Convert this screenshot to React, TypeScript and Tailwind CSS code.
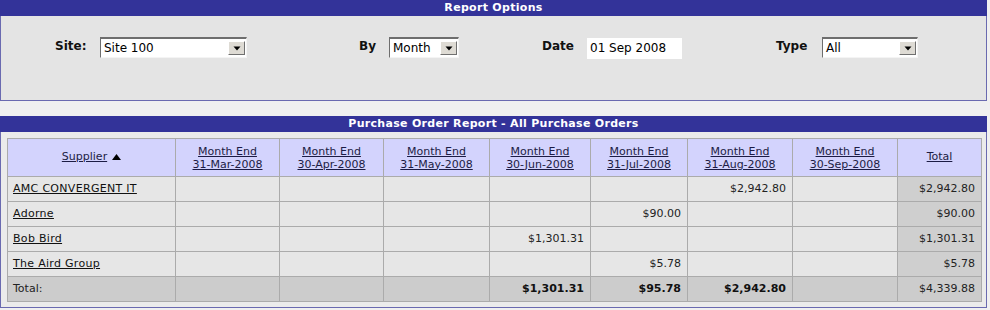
import React from "react";

const cols = "grid-cols-[167px_103px_103px_105px_100px_96px_104px_104px_83px]";

const months = [
  "31-Mar-2008",
  "30-Apr-2008",
  "31-May-2008",
  "30-Jun-2008",
  "31-Jul-2008",
  "31-Aug-2008",
  "30-Sep-2008",
];

const rows: { name: string; vals: string[]; total: string }[] = [
  { name: "AMC CONVERGENT IT", vals: ["", "", "", "", "", "$2,942.80", ""], total: "$2,942.80" },
  { name: "Adorne", vals: ["", "", "", "", "$90.00", "", ""], total: "$90.00" },
  { name: "Bob Bird", vals: ["", "", "", "$1,301.31", "", "", ""], total: "$1,301.31" },
  { name: "The Aird Group", vals: ["", "", "", "", "$5.78", "", ""], total: "$5.78" },
];

const totals = ["", "", "", "$1,301.31", "$95.78", "$2,942.80", ""];

function DropButton() {
  return (
    <div className="my-[2px] mr-[1px] flex w-[17px] items-center justify-center border-t border-l border-t-white border-l-white border-r border-b border-r-[#707070] border-b-[#707070] bg-[#dedbd4]">
      <svg width="8" height="5" viewBox="0 0 8 5">
        <path d="M0.5 0.5 L7.5 0.5 L4 4.5 Z" fill="#000" />
      </svg>
    </div>
  );
}

function Select({ value, className }: { value: string; className: string }) {
  return (
    <div
      className={
        "flex h-[21px] items-stretch border-t-2 border-l border-t-[#6e6e6e] border-l-[#6e6e6e] border-r border-b border-r-[#f4f4f4] border-b-[#f4f4f4] bg-white " +
        className
      }
    >
      <div className="flex-1 pl-[3px] text-[12px] leading-[18px] text-black">{value}</div>
      <DropButton />
    </div>
  );
}

function Label({ text, className }: { text: string; className: string }) {
  return (
    <div className={"pt-[2px] text-[12px] font-bold leading-[15px] text-[#111] " + className}>
      {text}
    </div>
  );
}

function Bar({ title }: { title: string }) {
  return (
    <div className="h-[16px] bg-[#333399] text-center text-[11px] font-bold leading-[16px] tracking-[0.3px] text-white">
      {title}
    </div>
  );
}

export default function App() {
  return (
    <div
      className="h-[310px] w-[990px] overflow-hidden bg-[#f0f0f0]"
      style={{ fontFamily: '"DejaVu Sans", Verdana, sans-serif' }}
    >
      {/* Report Options panel */}
      <div className="w-[987px]">
        <Bar title="Report Options" />
        <div className="h-[85px] border-x border-b border-[#6a6ab0] bg-[#e4e4e4] pl-[54px] pt-[21px]">
          <div className="flex items-start">
            <div className="flex w-[304px] items-start">
              <Label text="Site:" className="w-[45px]" />
              <Select value="Site 100" className="w-[147px]" />
            </div>
            <div className="flex w-[183px] items-start">
              <Label text="By" className="w-[30px]" />
              <Select value="Month" className="w-[70px]" />
            </div>
            <div className="flex w-[234px] items-start">
              <Label text="Date" className="w-[45px]" />
              <div className="mt-[1px] h-[21px] w-[95px] bg-white pl-[3px] text-[12px] leading-[21px] text-black">
                01 Sep 2008
              </div>
            </div>
            <div className="flex items-start">
              <Label text="Type" className="w-[46px]" />
              <Select value="All" className="w-[96px]" />
            </div>
          </div>
        </div>
      </div>

      {/* Purchase Order Report panel */}
      <div className="mt-[15px] w-[987px]">
        <Bar title="Purchase Order Report - All Purchase Orders" />
        <div className="border-x border-b border-[#6a6ab0] bg-[#ebebeb] pb-[5px] pl-[6px] pr-[5px] pt-[6px]">
          <div
            className={"grid w-[975px] gap-px bg-[#ababab] p-px text-[11px] text-[#222] " + cols}
          >
            {/* header */}
            <div className="flex h-[37px] items-center justify-center gap-[5px] bg-[#d3d3fd]">
              <span className="text-[#1c1c44] underline">Supplier</span>
              <svg width="9" height="6" viewBox="0 0 9 6" className="mt-[-1px]">
                <path d="M0 6 L4.5 0 L9 6 Z" fill="#000" />
              </svg>
            </div>
            {months.map((m) => (
              <div
                key={m}
                className="flex h-[37px] flex-col items-center justify-center bg-[#d3d3fd] text-center leading-[13px] text-[#1c1c44] underline"
              >
                <span>Month End</span>
                <span>{m}</span>
              </div>
            ))}
            <div className="flex h-[37px] items-center justify-center bg-[#d3d3fd] text-[#1c1c44] underline">
              Total
            </div>

            {/* data rows */}
            {rows.map((r) => (
              <React.Fragment key={r.name}>
                <div className="flex h-[24px] items-center bg-[#e6e6e6] px-[5px]">
                  <span className="tracking-[0.3px] text-[#111] underline">{r.name}</span>
                </div>
                {r.vals.map((v, i) => (
                  <div
                    key={i}
                    className="flex h-[24px] items-center justify-end bg-[#e6e6e6] px-[6px]"
                  >
                    {v}
                  </div>
                ))}
                <div className="flex h-[24px] items-center justify-end bg-[#cfcfcf] px-[6px]">
                  {r.total}
                </div>
              </React.Fragment>
            ))}

            {/* totals row */}
            <div className="flex h-[24px] items-center bg-[#cccccc] px-[5px]">Total:</div>
            {totals.map((v, i) => (
              <div
                key={i}
                className="flex h-[24px] items-center justify-end bg-[#cccccc] px-[6px] font-bold text-[#111]"
              >
                {v}
              </div>
            ))}
            <div className="flex h-[24px] items-center justify-end bg-[#cccccc] px-[6px]">
              $4,339.88
            </div>
          </div>
        </div>
      </div>
    </div>
  );
}
